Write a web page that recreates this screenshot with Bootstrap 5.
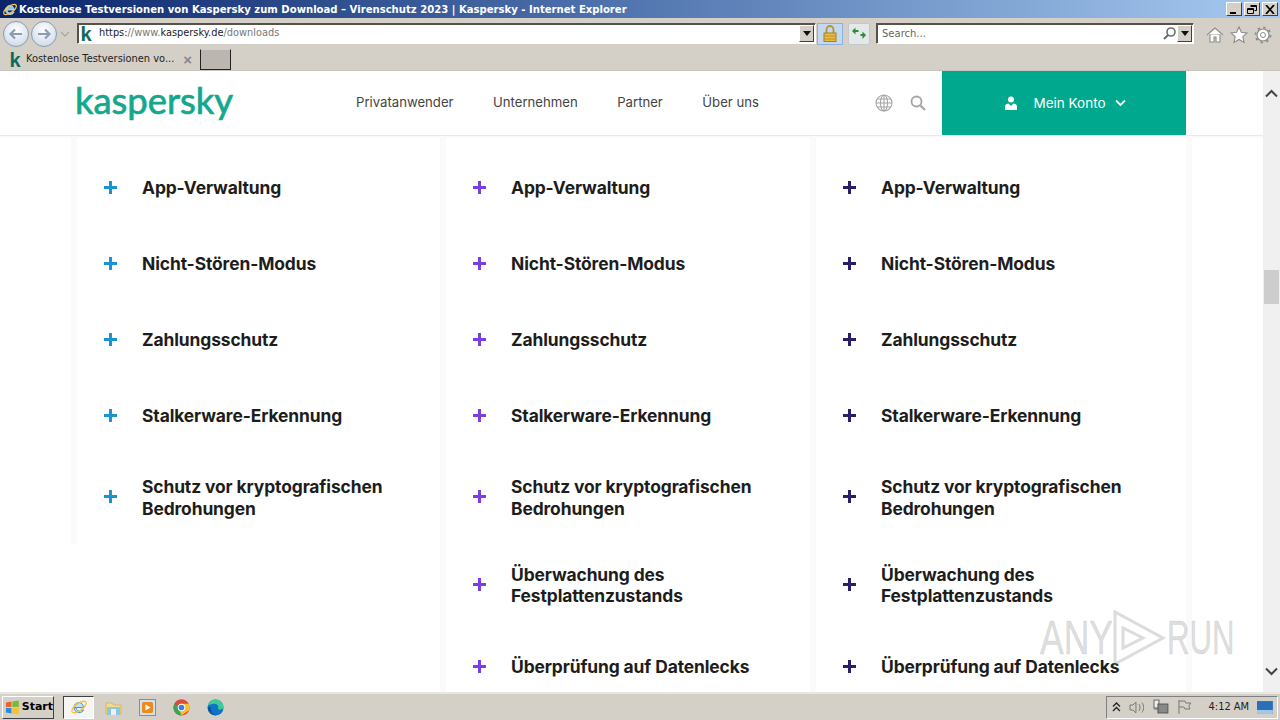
<!DOCTYPE html>
<html lang="de">
<head>
<meta charset="utf-8">
<title>Kaspersky</title>
<link href="https://cdn.jsdelivr.net/npm/bootstrap@5.3.0/dist/css/bootstrap.min.css" rel="stylesheet">
<style>
html,body{margin:0;height:720px;overflow:hidden;background:#fff}
.shell{width:1280px;height:720px;font-family:"Liberation Sans",sans-serif;font-size:11px;color:#222}
.titlebar{height:18px;background:linear-gradient(90deg,#0a246a 0%,#4a6ea9 45%,#a6caf0 100%);color:#fff;font-weight:700;padding-left:2px;gap:1px;flex:none}
.titlebar .ttl{font-family:"DejaVu Sans",sans-serif;font-size:10.08px;white-space:nowrap;padding-top:1px}
.winbtns{gap:2px;margin-right:2px;margin-left:auto}
.winbtn{width:16px;height:14px;background:#d4d0c8;border:1px solid;border-color:#fff #404040 #404040 #fff;display:flex;align-items:center;justify-content:center}
.chrome{background:#d4d0c8;flex:none}
.addr-row{height:29px;padding-left:3px;padding-top:2px}
.navcirc{width:26px;height:26px;border-radius:50%;border:1px solid #8a9bb0;background:radial-gradient(circle at 50% 35%,#fff,#c4d3e4);display:flex;align-items:center;justify-content:center}
.navcirc+.navcirc{margin-left:2px}
.chev{margin-left:3px;flex:none}
.field{height:21px;background:#fff;border:1px solid;border-color:#55524a #fff #fff #55524a;box-shadow:inset 1px 1px 0 #55524a}
.addr{width:739px;margin-left:7px}
.addr .url{font-family:"DejaVu Sans",sans-serif;font-size:9.8px;color:#222;margin-left:5px;white-space:nowrap}
.url i{font-style:normal;color:#777}
.kicon{color:#0d6b5e;font-family:"Liberation Sans",sans-serif;font-weight:700;font-size:20px;line-height:1;width:16px;text-align:center}
.drop{width:15px;height:17px;background:#d4d0c8;border:1px solid;border-color:#fff #404040 #404040 #fff;display:flex;align-items:center;justify-content:center;margin-left:auto;margin-right:1px;flex:none}
.tri{width:0;height:0;border-left:4px solid transparent;border-right:4px solid transparent;border-top:5px solid #111}
.lockbtn{width:26px;height:22px;background:#c4d8f2;border:1px solid #8fb0d8;margin-left:1px;display:flex;align-items:center;justify-content:center}
.refbtn{width:22px;height:22px;background:#e4e8ea;border:1px solid #c5c8c8;border-radius:2px;margin-left:5px;display:flex;align-items:center;justify-content:center}
.srch{width:318px;margin-left:6px}
.srch span{font-family:"DejaVu Sans",sans-serif;font-size:10px;color:#666;margin-left:5px}
.tools{gap:6px;margin-left:12px;margin-top:3px}
.tab-row{height:24px;padding-left:3px;padding-top:2px;border-bottom:1px solid #c8c4bc}
.tabitem{width:194px;height:21px;background:#d4d0c8;gap:3px;padding-left:4px}
.tabitem .lbl{font-family:"DejaVu Sans",sans-serif;font-size:9.85px;white-space:nowrap}
.tabitem .xx{color:#888;font-size:15px;line-height:1;font-weight:700;margin-left:auto;margin-right:5px}
.newtab{width:31px;height:21px;background:#bcb6b0;border:1px solid #222;border-top-color:#d4d0c8;margin-left:3px}
.viewport{flex:1 1 auto;min-height:0;overflow:hidden;position:relative;background:#fff}
.page{flex:1 1 auto;min-width:0;overflow:hidden;background:#fff}
.sitehead{height:65px;background:#fff;border-bottom:1px solid #e9e9e9;padding-left:77px;padding-right:77px;box-shadow:0 1px 2px rgba(0,0,0,.04)}
.logotext{font-family:"Lato",sans-serif;font-size:36.4px;font-weight:400;color:#13a88d;width:160px;line-height:1;-webkit-text-stroke:.7px #13a88d;margin-top:-5px;margin-left:-2px}
.menu{gap:39.5px;margin-left:121px;font-family:"Inter",sans-serif;font-size:13.15px;color:#444}
.menu a{color:#444;text-decoration:none;white-space:nowrap}
.headicons{margin-left:auto;gap:17px;margin-right:16px}
.account{width:244px;height:64px;background:#00a88e;color:#fff;font-family:"Inter",sans-serif;font-size:13.5px;gap:9px;padding-left:2px}
.account .acc-name{margin-left:6px}
.cols{padding-left:71px;width:1192px;height:560px}
.colm{width:369px;flex:none;border-left:6px solid #fafafa;padding-top:14px}
.colm.short{height:408px}
.colm.two{width:370px}
.colm.tail{width:382px;border-right:6px solid #fafafa}
.rowitem{height:76px;padding-left:27px}
.rowitem.dbl{height:87.5px}
.plusmark{width:13px;height:13px;flex:none;position:relative;margin-right:25px;margin-top:-2px}
.plusmark::before,.plusmark::after{content:"";position:absolute;background:currentColor}
.plusmark::before{left:0;right:0;top:5px;height:3px}
.plusmark::after{top:0;bottom:0;left:5px;width:3px}
.cblue{color:#1a93d0}.cviolet{color:#7a3fe4}.cnavy{color:#2c1d6b}
.ftitle{font-family:"Inter",sans-serif;font-weight:700;font-size:17.4px;line-height:21.6px;color:#1d1d1b;letter-spacing:-.1px}
.scrollbar{width:17px;background:#f0f0f0;position:relative;flex:none}
.sb-thumb{position:absolute;left:1px;width:15px;top:199px;height:34px;background:#cdcdcd}
.sb-up,.sb-down{position:absolute;left:2px}
.sb-up{top:18px}.sb-down{bottom:16px}
.wmark{position:absolute;left:1040px;top:539px;width:194px;height:56px;pointer-events:none;color:rgba(150,150,150,.33);font-family:"Liberation Sans",sans-serif;font-size:48px;line-height:30px}
.wmark span{display:block;flex:none;width:65px;transform:scaleX(.74);transform-origin:left center;white-space:nowrap;-webkit-text-stroke:.5px rgba(150,150,150,.33)}
.wmark span.wm-run{transform:scaleX(.65)}
.wm-play{flex:none}
.taskbar{height:28px;background:#d4d0c8;border-top:2px solid #e9e7e2;flex:none;padding-left:2px}
.startbtn{width:52px;height:23px;background:#d4d0c8;border:1px solid;border-color:#fff #404040 #404040 #fff;font-weight:700;gap:2px;padding-left:2px;color:#000;font-family:"DejaVu Sans",sans-serif;font-size:11px}
.iebtn{width:31px;height:23px;background:#f6f5f2;border:1px solid;border-color:#404040 #fff #fff #404040;margin-left:9px;display:flex;align-items:center;justify-content:center}
.tasks{gap:17px;margin-left:11px}
.tray{margin-left:auto;height:23px;width:172px;border:1px solid;border-color:#808080 #fff #fff #808080;margin-right:2px;padding-left:5px;gap:8px;font-family:"DejaVu Sans",sans-serif;font-size:9.9px;color:#222}
.tray .clock{margin-left:9px;white-space:nowrap}
</style>
</head>
<body>
<div class="shell d-flex flex-column">
  <div class="titlebar d-flex align-items-center">
    <svg width="16" height="17" viewBox="0 0 16 16"><path d="M3.500 8.500h8.600C12 5.800 10.200 4 8 4 5.500 4 3.500 6 3.500 8.500c0 2.700 2 4.500 4.600 4.500 1.800 0 3.200-.8 4-2.300H9.900c-.5.600-1.100.9-1.900.9-1.400 0-2.500-1-2.500-2.600" fill="#7cc8f4" stroke="#e8f4fc" stroke-width=".7"/><ellipse cx="8" cy="8" rx="7.500" ry="3.200" transform="rotate(-35 8 8)" fill="none" stroke="#f5c542" stroke-width="1.300"/></svg>
    <span class="ttl">Kostenlose Testversionen von Kaspersky zum Download – Virenschutz 2023 | Kaspersky - Internet Explorer</span>
    <div class="winbtns d-flex">
      <div class="winbtn"><svg width="10" height="9"><rect x="1" y="7" width="6" height="2" fill="#000"/></svg></div>
      <div class="winbtn"><svg width="10" height="9"><path d="M3.500 .5h6v5h-2M.5 3.500h6v5h-6zM.5 4.500h6M3.500 1.500h6" fill="none" stroke="#000"/></svg></div>
      <div class="winbtn"><svg width="10" height="9"><path d="M1 0l8 9M9 0L1 9" stroke="#000" stroke-width="1.800"/></svg></div>
    </div>
  </div>
  <div class="chrome addr-row d-flex align-items-center">
    <div class="navcirc"><svg width="16" height="14"><path d="M14 7H3M7 2.500L2.500 7 7 11.500" fill="none" stroke="#8c9cb2" stroke-width="2.200"/></svg></div>
    <div class="navcirc"><svg width="16" height="14"><path d="M2 7h11M9 2.500L13.500 7 9 11.500" fill="none" stroke="#8c9cb2" stroke-width="2.200"/></svg></div>
    <svg class="chev" width="10" height="6"><path d="M1 1l4 4 4-4" fill="none" stroke="#a8a8a8" stroke-width="1.300"/></svg>
    <div class="field addr d-flex align-items-center">
      <span class="kicon">k</span>
      <span class="url">https:<i>//</i><i>www.</i>kaspersky.de<i>/downloads</i></span>
      <div class="drop"><div class="tri"></div></div>
    </div>
    <div class="lockbtn"><svg width="14" height="17" viewBox="0 0 14 17"><path d="M3.500 8V4.500a3.500 3.500 0 0 1 7 0V8" fill="none" stroke="#b8922c" stroke-width="1.800"/><rect x="1" y="8" width="12" height="8.500" fill="#eebb3c" stroke="#a87f20"/><path d="M1 11h12M1 14h12" stroke="#b8922c"/></svg></div>
    <div class="refbtn"><svg width="16" height="13" viewBox="0 0 16 13"><path d="M1 4l3.500-3.500V3h3v2h-3v2.500zM15 8l-3.500-3.500V7h-2v2h2v3z" fill="#2f8a35"/></svg></div>
    <div class="field srch d-flex align-items-center">
      <span>Search...</span>
      <svg class="ms-auto" width="15" height="15" viewBox="0 0 15 15"><circle cx="9" cy="6" r="4" fill="none" stroke="#6a6a6a" stroke-width="1.600"/><path d="M6 9l-4 4" stroke="#6a6a6a" stroke-width="2"/></svg>
      <div class="drop ms-0"><div class="tri"></div></div>
    </div>
    <div class="tools d-flex align-items-center">
      <svg width="18" height="18" viewBox="0 0 18 18"><path d="M1 9l8-7 8 7M4 8v8h4v-5h2v5h4V8" fill="#fff" stroke="#8c8c8c" stroke-width="1.100"/></svg>
      <svg width="18" height="18" viewBox="0 0 18 18"><path d="M9 1l2.400 5.300 5.600.6-4.200 3.800 1.200 5.700L9 13.500 4 16.400l1.200-5.700L1 6.900l5.600-.6z" fill="#fff" stroke="#8c8c8c" stroke-width="1.100"/></svg>
      <svg width="18" height="18" viewBox="0 0 18 18"><circle cx="9" cy="9" r="6" fill="#fff" stroke="#8c8c8c" stroke-width="1.200"/><circle cx="9" cy="9" r="7.500" fill="none" stroke="#8c8c8c" stroke-width="1.800" stroke-dasharray="2.400 3.500"/><circle cx="9" cy="9" r="2.500" fill="none" stroke="#8c8c8c"/></svg>
    </div>
  </div>
  <div class="chrome tab-row d-flex align-items-center">
    <div class="tabitem d-flex align-items-center">
      <span class="kicon">k</span>
      <span class="lbl">Kostenlose Testversionen vo...</span>
      <span class="xx">×</span>
    </div>
    <div class="newtab"></div>
  </div>
  <div class="viewport d-flex">
    <div class="page">
      <header class="sitehead d-flex align-items-center">
        <div class="logotext">kaspersky</div>
        <nav class="menu d-flex align-items-center">
          <a href="#">Privatanwender</a><a href="#">Unternehmen</a><a href="#">Partner</a><a href="#">Über uns</a>
        </nav>
        <div class="headicons d-flex align-items-center">
          <svg width="18" height="18" viewBox="0 0 18 18" fill="none" stroke="#a5a5a5" stroke-width="1.100"><circle cx="9" cy="9" r="8"/><ellipse cx="9" cy="9" rx="3.500" ry="8"/><path d="M1 9h16M2 5h14M2 13h14M9 1v16"/></svg>
          <svg width="16" height="16" viewBox="0 0 16 16" fill="none" stroke="#a5a5a5" stroke-width="1.800"><circle cx="6.500" cy="6.500" r="5"/><path d="M10.500 10.500L15 15" stroke-width="2.200"/></svg>
        </div>
        <div class="account d-flex align-items-center justify-content-center">
          <svg width="14" height="14" viewBox="0 0 14 14" fill="#fff"><circle cx="7" cy="3.500" r="3"/><path d="M1 14v-3.500C1 8.500 3 7.500 4.500 7.500L7 10l2.500-2.500C11 7.500 13 8.500 13 10.500V14z"/></svg>
          <span class="acc-name">Mein Konto</span>
          <svg width="11" height="8" viewBox="0 0 11 8"><path d="M1 1.500l4.500 4.500L10 1.500" fill="none" stroke="#fff" stroke-width="1.800"/></svg>
        </div>
      </header>
      <div class="cols d-flex">
        <div class="colm short">
          <div class="rowitem d-flex align-items-center"><span class="plusmark cblue"></span><span class="ftitle">App-Verwaltung</span></div>
          <div class="rowitem d-flex align-items-center"><span class="plusmark cblue"></span><span class="ftitle">Nicht-Stören-Modus</span></div>
          <div class="rowitem d-flex align-items-center"><span class="plusmark cblue"></span><span class="ftitle">Zahlungsschutz</span></div>
          <div class="rowitem d-flex align-items-center"><span class="plusmark cblue"></span><span class="ftitle">Stalkerware-Erkennung</span></div>
          <div class="rowitem dbl d-flex align-items-center"><span class="plusmark cblue"></span><span class="ftitle">Schutz vor kryptografischen<br>Bedrohungen</span></div>
        </div>
        <div class="colm two">
          <div class="rowitem d-flex align-items-center"><span class="plusmark cviolet"></span><span class="ftitle">App-Verwaltung</span></div>
          <div class="rowitem d-flex align-items-center"><span class="plusmark cviolet"></span><span class="ftitle">Nicht-Stören-Modus</span></div>
          <div class="rowitem d-flex align-items-center"><span class="plusmark cviolet"></span><span class="ftitle">Zahlungsschutz</span></div>
          <div class="rowitem d-flex align-items-center"><span class="plusmark cviolet"></span><span class="ftitle">Stalkerware-Erkennung</span></div>
          <div class="rowitem dbl d-flex align-items-center"><span class="plusmark cviolet"></span><span class="ftitle">Schutz vor kryptografischen<br>Bedrohungen</span></div>
          <div class="rowitem dbl d-flex align-items-center"><span class="plusmark cviolet"></span><span class="ftitle">Überwachung des<br>Festplattenzustands</span></div>
          <div class="rowitem d-flex align-items-center"><span class="plusmark cviolet"></span><span class="ftitle">Überprüfung auf Datenlecks</span></div>
        </div>
        <div class="colm tail">
          <div class="rowitem d-flex align-items-center"><span class="plusmark cnavy"></span><span class="ftitle">App-Verwaltung</span></div>
          <div class="rowitem d-flex align-items-center"><span class="plusmark cnavy"></span><span class="ftitle">Nicht-Stören-Modus</span></div>
          <div class="rowitem d-flex align-items-center"><span class="plusmark cnavy"></span><span class="ftitle">Zahlungsschutz</span></div>
          <div class="rowitem d-flex align-items-center"><span class="plusmark cnavy"></span><span class="ftitle">Stalkerware-Erkennung</span></div>
          <div class="rowitem dbl d-flex align-items-center"><span class="plusmark cnavy"></span><span class="ftitle">Schutz vor kryptografischen<br>Bedrohungen</span></div>
          <div class="rowitem dbl d-flex align-items-center"><span class="plusmark cnavy"></span><span class="ftitle">Überwachung des<br>Festplattenzustands</span></div>
          <div class="rowitem d-flex align-items-center"><span class="plusmark cnavy"></span><span class="ftitle">Überprüfung auf Datenlecks</span></div>
        </div>
      </div>
    </div>
    <div class="scrollbar">
      <svg class="sb-up" width="13" height="9" viewBox="0 0 13 9"><path d="M1 7.500l5.500-5.500L12 7.500" fill="none" stroke="#444" stroke-width="2"/></svg>
      <div class="sb-thumb"></div>
      <svg class="sb-down" width="13" height="9" viewBox="0 0 13 9"><path d="M1 1.500l5.500 5.500L12 1.500" fill="none" stroke="#444" stroke-width="2"/></svg>
    </div>
    <div class="wmark d-flex align-items-center">
      <span>ANY</span>
      <svg class="wm-play" width="62" height="56" viewBox="0 0 62 56" fill="none" stroke="rgba(150,150,150,.33)" stroke-width="3"><path d="M10 2v52l48-26zM18 18v20l20-10z"/></svg>
      <span class="wm-run">RUN</span>
    </div>
  </div>
  <div class="taskbar d-flex align-items-center">
    <div class="startbtn d-flex align-items-center">
      <svg width="16" height="15" viewBox="0 0 16 15"><path d="M1 2l6-1v6H1z" fill="#e8662c"/><path d="M8 1l7-1v7H8z" fill="#7cb83a"/><path d="M1 8h6v6l-6-1z" fill="#2b8be0"/><path d="M8 8h7v7l-7-1z" fill="#f4c22c"/></svg>
      <span>Start</span>
    </div>
    <div class="iebtn"><svg width="18" height="18" viewBox="0 0 16 16"><path d="M3.500 8.500h8.600C12 5.800 10.200 4 8 4 5.500 4 3.500 6 3.500 8.500c0 2.700 2 4.500 4.600 4.500 1.800 0 3.200-.8 4-2.300H9.900c-.5.600-1.100.9-1.900.9-1.400 0-2.500-1-2.500-2.600" fill="#bfe2f8" stroke="#2b86d2" stroke-width=".8"/><ellipse cx="8" cy="8" rx="7.500" ry="3.200" transform="rotate(-35 8 8)" fill="none" stroke="#f5c542" stroke-width="1.300"/></svg></div>
    <div class="tasks d-flex align-items-center">
      <svg width="17" height="17" viewBox="0 0 17 17"><path d="M1 4h6l1.500 2H16v9H1z" fill="#f2dc8c" stroke="#c9ad55" stroke-width=".7"/><rect x="2" y="8" width="13" height="8" fill="#8ec6dc"/><rect x="6" y="10" width="5" height="6" fill="#eee"/></svg>
      <svg width="17" height="17" viewBox="0 0 17 17"><rect x=".5" y=".5" width="16" height="16" fill="#cfe2f2" stroke="#6f93b5"/><rect x="3" y="3" width="11" height="11" rx="1.500" fill="#ee8a1d"/><path d="M6.500 5.500v6l5-3z" fill="#fff"/></svg>
      <svg width="17" height="17" viewBox="0 0 18 18"><circle cx="9" cy="9" r="8.500" fill="#e04a3a"/><path d="M9 9L1.800 13.500A8.500 8.500 0 0 1 1.500 5z" fill="#3aa655"/><path d="M9 .5A8.500 8.500 0 0 1 17 12L9 17.500 5 11z" fill="#f4c22c"/><path d="M1.200 5.500A8.500 8.500 0 0 1 16.500 5H9z" fill="#e04a3a"/><path d="M1.800 13.500L6 10l3 7.500a8.500 8.500 0 0 1-7.200-4z" fill="#3aa655"/><circle cx="9" cy="9" r="4" fill="#fff"/><circle cx="9" cy="9" r="3" fill="#3b7fe0"/></svg>
      <svg width="17" height="17" viewBox="0 0 18 18"><circle cx="9" cy="9" r="8.500" fill="#1273c4"/><path d="M1 7C2 2.500 6 .5 9 .5c4.500 0 8.500 3.500 8.500 8 0 1.500-1.300 2.500-3.500 2.500-1.500 0-2.500-.3-2.500-.8C13 9 11.500 5 8 5 4.500 5 2 6.500 1 7z" fill="#3ecb9c"/><path d="M4 10c0 4 3.500 7.500 7.500 7.500C8 18 1 15 1 9c1-1 3-1 3 1z" fill="#0c4f96"/></svg>
    </div>
    <div class="tray d-flex align-items-center">
      <svg width="9" height="10" viewBox="0 0 9 10"><path d="M1 4.500l3.500-3.500L8 4.500M1 9l3.500-3.500L8 9" fill="none" stroke="#222" stroke-width="1.300"/></svg>
      <svg width="16" height="15" viewBox="0 0 16 15" fill="none" stroke="#777"><path d="M1 5h3l3-3v11l-3-3H1zM10 4c1.500 2 1.500 5 0 7M13 2.500c2.300 3 2.300 7 0 10"/></svg>
      <svg width="16" height="16" viewBox="0 0 16 16"><rect x="1" y="1" width="5" height="8" fill="#eee" stroke="#666"/><rect x="5" y="5" width="10" height="9" fill="#888" stroke="#555"/><path d="M1 10h5" stroke="#666"/></svg>
      <svg width="15" height="16" viewBox="0 0 15 16" fill="none" stroke="#777"><path d="M2 1v14M2 2h6l1 2h5l-2 3 1 3H8L7 8H2"/></svg>
      <span class="clock">4:12 AM</span>
      <svg class="ms-auto me-1" width="16" height="13" viewBox="0 0 16 13"><rect width="16" height="13" fill="#2a6fb8"/><rect y="9" width="16" height="4" fill="#9ec7e8"/></svg>
    </div>
  </div>
</div>
<script src="https://cdn.jsdelivr.net/npm/bootstrap@5.3.0/dist/js/bootstrap.bundle.min.js"></script>
</body>
</html>
